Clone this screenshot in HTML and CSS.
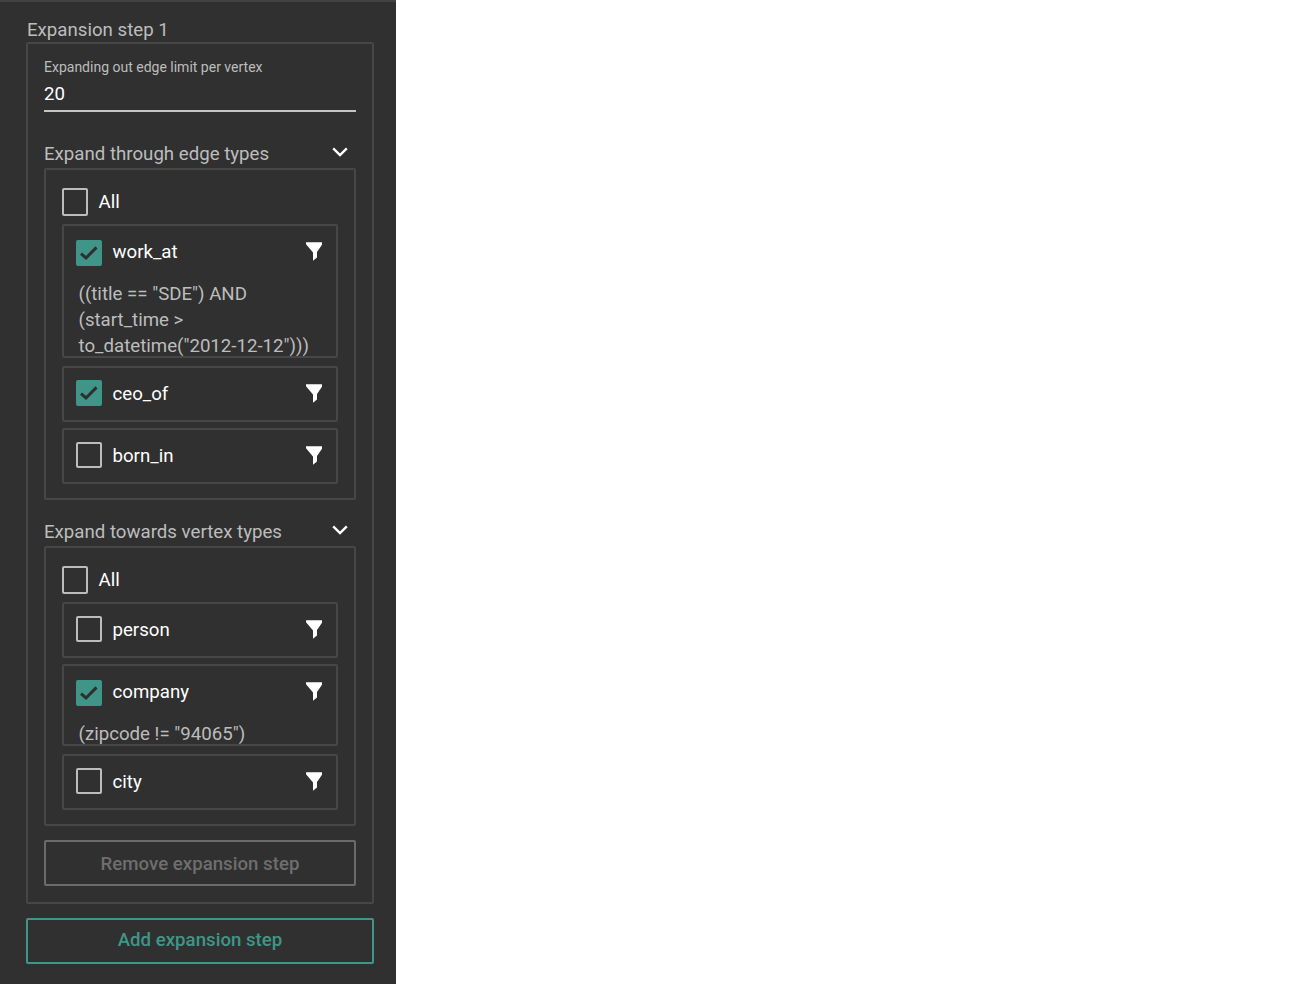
FILE: index.html
```html
<!DOCTYPE html>
<html lang="en">
<head>
<meta charset="utf-8">
<title>Expansion step</title>
<link rel="stylesheet" href="styles.css">
</head>
<body>
<svg class="defs" width="0" height="0" aria-hidden="true">
  <symbol id="funnel" viewBox="0 0 16 19"><path d="M0 0.3H16.3V2.2L11 10V15.6L7 18.8V10.4L0 2.2Z"/></symbol>
  <symbol id="tick" viewBox="0 0 26 26"><path d="M5 13.6L10 18L20.5 7.4" fill="none" stroke="#2f2f2f" stroke-width="3"/></symbol>
  <symbol id="chev" viewBox="0 0 16 10"><path d="M1.2 1.4L8 8L14.8 1.4" fill="none" stroke="#fff" stroke-width="2.4"/></symbol>
</svg>
<aside class="panel">
  <h2 class="step-title">Expansion step 1</h2>
  <section class="step-box">
    <div class="field">
      <div class="field-label">Expanding out edge limit per vertex</div>
      <div class="field-value">20</div>
    </div>

    <div class="group-head first">
      <span>Expand through edge types</span>
      <svg class="chev"><use href="#chev"/></svg>
    </div>
    <div class="group-box">
      <div class="all-row"><span class="check"></span><span class="name">All</span></div>
      <div class="item filtered lines3">
        <div class="item-row"><span class="check on"><svg><use href="#tick"/></svg></span><span class="name">work_at</span><svg class="funnel"><use href="#funnel"/></svg></div>
        <div class="filter-text">((title == "SDE") AND (start_time &gt; to_datetime("2012-12-12")))</div>
      </div>
      <div class="item">
        <div class="item-row"><span class="check on"><svg><use href="#tick"/></svg></span><span class="name">ceo_of</span><svg class="funnel"><use href="#funnel"/></svg></div>
      </div>
      <div class="item">
        <div class="item-row"><span class="check"></span><span class="name">born_in</span><svg class="funnel"><use href="#funnel"/></svg></div>
      </div>
    </div>

    <div class="group-head">
      <span>Expand towards vertex types</span>
      <svg class="chev"><use href="#chev"/></svg>
    </div>
    <div class="group-box">
      <div class="all-row"><span class="check"></span><span class="name">All</span></div>
      <div class="item">
        <div class="item-row"><span class="check"></span><span class="name">person</span><svg class="funnel"><use href="#funnel"/></svg></div>
      </div>
      <div class="item filtered lines1">
        <div class="item-row"><span class="check on"><svg><use href="#tick"/></svg></span><span class="name">company</span><svg class="funnel"><use href="#funnel"/></svg></div>
        <div class="filter-text">(zipcode != "94065")</div>
      </div>
      <div class="item">
        <div class="item-row"><span class="check"></span><span class="name">city</span><svg class="funnel"><use href="#funnel"/></svg></div>
      </div>
    </div>

    <button class="btn btn-muted" type="button">Remove expansion step</button>
  </section>
  <button class="btn btn-teal" type="button">Add expansion step</button>
</aside>
</body>
</html>
```

FILE: styles.css
```css
* { box-sizing: border-box; }
html, body { margin: 0; height: 100%; }
body { background: #fff; font-family: Roboto, "Liberation Sans", sans-serif; overflow: hidden; }
.defs { position: absolute; }
.panel {
  width: 396px;
  height: 984px;
  background: #303030;
  border-top: 2px solid #424242;
  padding: 0 22px 0 26px;
}
.step-title {
  margin: 0;
  height: 40px;
  padding: 17px 0 0 1px;
  font-size: 18.67px;
  line-height: 22px;
  font-weight: 400;
  color: #bdbdbd;
}
.step-box {
  border: 2px solid #474747;
  border-radius: 2px;
  height: 862px;
  padding: 0 16px;
}
.field { height: 68px; border-bottom: 2px solid #c4c4c4; padding-top: 15px; }
.field-label { font-size: 14px; line-height: 16px; color: #bdbdbd; }
.field-value { font-size: 18.67px; line-height: 22px; margin-top: 7px; padding-top: 1px; color: #fff; }
.group-head {
  height: 46px;
  display: flex;
  align-items: flex-end;
  justify-content: space-between;
  font-size: 18.67px;
  line-height: 22px;
  color: #bdbdbd;
  padding-bottom: 3px;
}
.group-head.first { height: 56px; }
.chev { width: 16px; height: 10px; margin: 0 8px 8px 0; }
.group-box { border: 2px solid #474747; border-radius: 2px; padding: 0 16px 8px; }
.all-row { height: 54px; display: flex; align-items: center; padding-top: 10px; gap: 10.5px; }
.check {
  width: 26px;
  height: 26px;
  flex: none;
  border: 2px solid #bdbdbd;
  border-radius: 2px;
  display: block;
}
.all-row .check { height: 28px; }
.check.on { border: 0; background: #3f9688; }
.check svg { display: block; width: 26px; height: 26px; }
.name { font-size: 18.67px; line-height: 22px; color: #fff; }
.item { border: 2px solid #474747; border-radius: 2px; height: 56px; margin-bottom: 6px; overflow: hidden; }
.item.filtered { margin-bottom: 8px; }
.item.lines3 { height: 134px; }
.item.lines1 { height: 82px; }
.item-row { height: 50px; display: flex; align-items: center; padding: 0 14px 0 12px; gap: 10.5px; }
.item-row .name { position: relative; top: 1px; }
.funnel { width: 16px; height: 19px; fill: #fff; margin-left: auto; position: relative; top: 0.5px; overflow: visible; }
.filtered .item-row { height: 54px; }
.filtered .item-row .name { top: -1px; }
.filtered .funnel { top: -1.5px; }
.filter-text { padding: 1px 12px 0 14.5px; font-size: 18.67px; line-height: 26px; color: #bdbdbd; }
.btn {
  display: block;
  width: 100%;
  height: 46px;
  background: transparent;
  border: 2px solid #6b6b6b;
  border-radius: 2px;
  font-family: inherit;
  font-size: 18.67px;
  font-weight: 500;
  color: #6e6e6e;
  padding: 2px 0 0;
}
.btn-muted { margin-top: 14px; }
.btn-teal { margin-top: 14px; border-color: #3f9688; color: #3f9688; padding: 0 0 2px; }
```
